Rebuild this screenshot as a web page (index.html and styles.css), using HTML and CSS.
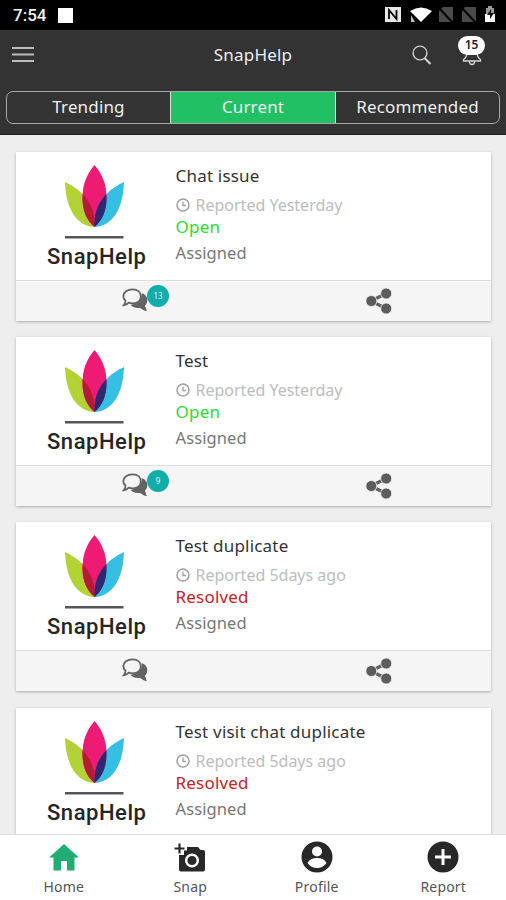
FILE: index.html
```html
<!DOCTYPE html>
<html lang="en">
<head>
<meta charset="utf-8">
<title>SnapHelp</title>
<link rel="stylesheet" href="styles.css">
</head>
<body>
<svg class="defs" width="0" height="0">
  <defs>
    <clipPath id="mid"><path d="M34.500 5C43 15 46.500 25 46.500 38C46.500 51 42 61 34.500 67C27 61 22.500 51 22.500 38C22.500 25 26 15 34.500 5Z"/></clipPath>
    <symbol id="logo" viewBox="0 0 70 82">
      <path fill="#b3d235" d="M5 22C18 28 36 41 34.500 67C17 66 6 50 5 22Z"/>
      <path fill="#35bfe3" d="M64 22C51 28 33 41 34.500 67C52 66 63 50 64 22Z"/>
      <path fill="#ed1b73" d="M34.500 5C43 15 46.500 25 46.500 38C46.500 51 42 61 34.500 67C27 61 22.500 51 22.500 38C22.500 25 26 15 34.500 5Z"/>
      <g clip-path="url(#mid)">
        <path fill="#b51b33" d="M5 22C18 28 36 41 34.500 67C17 66 6 50 5 22Z"/>
        <path fill="#2d2871" d="M64 22C51 28 33 41 34.500 67C52 66 63 50 64 22Z"/>
      </g>
      <path fill="#56565a" d="M5 76h58.500v2.500H5z"/>
    </symbol>
    <symbol id="clock" viewBox="0 0 14 14">
      <circle cx="7" cy="7" r="6" fill="none" stroke="#a0a0a0" stroke-width="1.500"/>
      <path d="M7 3.500V7.500H10" fill="none" stroke="#a0a0a0" stroke-width="1.300"/>
    </symbol>
    <symbol id="chat" viewBox="0 0 26 24">
      <path fill="#636363" d="M21 5.500C24.500 7.500 26 10.500 25 14C24.700 15.500 24 16.500 23 17.500C23 19.500 23.800 21.500 25 23C22 22.800 20 21.500 18.500 20C14 20.500 10.500 19.200 8.500 16.800C15.500 17 19.500 13 21 5.500Z"/>
      <path fill="#f5f5f5" stroke="#636363" stroke-width="1.800" d="M10.500 1.300C15.800 1.300 18.800 4.300 18.800 8.300C18.800 12.400 15.800 15.300 10.800 15.300C9.300 15.300 8 15.100 6.800 14.700C5.500 16.200 3.800 17.100 1.700 17.300C2.900 15.900 3.500 14.600 3.500 12.800C2 11.500 1.300 10 1.300 8.300C1.300 4.300 5.400 1.300 10.500 1.300Z"/>
      <path fill="#636363" d="M19.500 5C25 7.500 26.500 13 22.800 17.500L24.500 22.500L18.500 19.500C15 20 12 19 10 16.500C16.500 16 20.500 12 19.500 5Z"/>
    </symbol>
    <symbol id="share" viewBox="0 0 26 26">
      <path d="M5 13L20 5.500M5 13L20 20.500" stroke="#636363" stroke-width="3.600"/>
      <g fill="#5c5c5c" stroke="#f5f5f5" stroke-width=".8"><circle cx="5.300" cy="13" r="5.500"/><circle cx="20.200" cy="5.500" r="5.500"/><circle cx="20.200" cy="20.500" r="5.500"/></g>
    </symbol>
  </defs>
</svg>
<div class="app">
  <div class="status">
    <span class="time">7:54</span><span class="square"></span>
    <svg class="indicators" width="114" height="18" viewBox="0 0 114 18">
      <path fill="#e8e8e8" d="M1 1h16v15H1z"/><path fill="none" stroke="#080808" stroke-width="1.800" d="M5 13V4L12.500 13V4"/>
      <path fill="#fff" d="M26 5Q37-2 48 5L37 16Z"/><path fill="#bbb" d="M27 9l4 7h-4z"/>
      <path fill="#4a4a4a" d="M59 1h10v15H55V5zM81 1h11v15H78V5z"/><path stroke="#050505" stroke-width="2" d="M55 2l14 15M78 2l14 15"/>
      <path fill="#999" d="M104 0h4v2h2v6h-8V2h2z"/><path fill="#fff" d="M101 8h10v8h-10z"/><path fill="#151515" d="M107 3l-4 6h3v4l4-6h-3z"/>
    </svg>
  </div>
  <header class="header">
    <div class="bar">
      <svg class="menu" width="22" height="18" viewBox="0 0 22 18"><path d="M0 2h22M0 8.500h22M0 15h22" stroke="#bcbcbc" stroke-width="1.800"/></svg>
      <h1>SnapHelp</h1>
      <svg class="search" width="20" height="21" viewBox="0 0 20 21" fill="none"><circle cx="8" cy="8" r="6.900" stroke="#d0d0d0" stroke-width="1.400"/><path d="M12.500 13L18.500 19" stroke="#d8d8d8" stroke-width="2"/></svg>
      <div class="bell"><svg width="20" height="22" viewBox="0 0 20 22" fill="none" stroke="#d5d5d5" stroke-width="1.300"><path d="M5 1V8C5 12 4 14 1.500 15.500V17H18.500V15.500C16 14 15 12 15 8V1M7.500 17.500A2.500 3 0 0 0 12.500 17.500"/></svg><span class="count">15</span></div>
    </div>
    <div class="tabs"><span class="tab">Trending</span><span class="tab active">Current</span><span class="tab">Recommended</span></div>
  </header>
  <main class="list">
    <article class="card">
      <div class="body">
        <div class="brand"><svg width="70" height="82"><use href="#logo"/></svg><span>SnapHelp</span></div>
        <div class="info"><h2>Chat issue</h2><p class="when"><svg width="14" height="14"><use href="#clock"/></svg><span>Reported Yesterday</span></p><p class="open">Open</p><p class="assigned">Assigned</p></div>
      </div>
      <div class="actions"><div class="action"><svg width="26" height="24"><use href="#chat"/></svg><span class="badge">13</span></div><div class="action"><svg width="26" height="26"><use href="#share"/></svg></div></div>
    </article>
    <article class="card">
      <div class="body">
        <div class="brand"><svg width="70" height="82"><use href="#logo"/></svg><span>SnapHelp</span></div>
        <div class="info"><h2>Test</h2><p class="when"><svg width="14" height="14"><use href="#clock"/></svg><span>Reported Yesterday</span></p><p class="open">Open</p><p class="assigned">Assigned</p></div>
      </div>
      <div class="actions"><div class="action"><svg width="26" height="24"><use href="#chat"/></svg><span class="badge">9</span></div><div class="action"><svg width="26" height="26"><use href="#share"/></svg></div></div>
    </article>
    <article class="card">
      <div class="body">
        <div class="brand"><svg width="70" height="82"><use href="#logo"/></svg><span>SnapHelp</span></div>
        <div class="info"><h2>Test duplicate</h2><p class="when"><svg width="14" height="14"><use href="#clock"/></svg><span>Reported 5days ago</span></p><p class="resolved">Resolved</p><p class="assigned">Assigned</p></div>
      </div>
      <div class="actions"><div class="action"><svg width="26" height="24"><use href="#chat"/></svg></div><div class="action"><svg width="26" height="26"><use href="#share"/></svg></div></div>
    </article>
    <article class="card">
      <div class="body">
        <div class="brand"><svg width="70" height="82"><use href="#logo"/></svg><span>SnapHelp</span></div>
        <div class="info"><h2>Test visit chat duplicate</h2><p class="when"><svg width="14" height="14"><use href="#clock"/></svg><span>Reported 5days ago</span></p><p class="resolved">Resolved</p><p class="assigned">Assigned</p></div>
      </div>
    </article>
  </main>
  <nav class="nav">
    <div class="item"><svg width="32" height="32" viewBox="0 0 32 32"><path fill="#22ad73" d="M16 3L1 16.500H5.500V29.500H13V20H19V29.500H26.500V16.500H31Z"/></svg><span>Home</span></div>
    <div class="item"><svg width="32" height="32" viewBox="0 0 32 32"><path fill="#282828" d="M13 6H24L26.500 9H29Q31 9 31 11V28.500Q31 30.500 29 30.500H7Q5 30.500 5 28.500V14H10V9.500H13Z"/><path stroke="#282828" stroke-width="2.200" d="M5.500 2.500V12.500M.5 7.500H10.500"/><circle cx="18" cy="19.500" r="5.800" fill="none" stroke="#fff" stroke-width="2.400"/></svg><span>Snap</span></div>
    <div class="item"><svg width="32" height="32" viewBox="0 0 32 32"><circle cx="16" cy="16" r="15.500" fill="#282828"/><circle cx="16" cy="10.500" r="5" fill="#fff"/><path fill="#fff" d="M6.500 22Q9 17 16 17T25.500 22Q22 27 16 27T6.500 22Z"/></svg><span>Profile</span></div>
    <div class="item"><svg width="32" height="32" viewBox="0 0 32 32"><circle cx="16" cy="16" r="15.500" fill="#282828"/><path stroke="#fff" stroke-width="3" d="M16 8V24M8 16H24"/></svg><span>Report</span></div>
  </nav>
</div>
</body>
</html>
```
FILE: styles.css
```css
* { box-sizing: border-box; }
body { margin: 0; font-family: "Noto Sans", "Open Sans", sans-serif; }
h1, h2, p { margin: 0; font-weight: 400; }
svg { display: block; flex: none; }
.defs { position: absolute; }
.app { width: 506px; height: 900px; display: flex; flex-direction: column; overflow: hidden; background: #eee; }
.status { height: 30px; flex: none; background: #000; display: flex; align-items: center; padding: 0 10px 0 13px; }
.time { color: #f2f2f2; font: 500 17px/30px Roboto, sans-serif; width: 45px; }
.square { width: 15px; height: 15px; background: #fff; }
.indicators { margin-left: auto; margin-right: -2px; }
.header { height: 105px; flex: none; background: #333; border-bottom: 1px solid #222; }
.bar { height: 61px; display: grid; grid-template-columns: 1fr auto 1fr; position: relative; }
.menu { margin: 16px 0 0 12px; }
h1 { font-size: 17px; line-height: 24px; letter-spacing: .2px; color: #eee; margin-top: 13px; }
.bar .search { margin: 15px 0 0 120px; }
.bell { position: absolute; left: 462px; top: 14px; }
.count { position: absolute; left: -4px; top: -8px; width: 27px; height: 19px; border-radius: 10px; background: #fff; color: #222; font-size: 12px; font-weight: 600; line-height: 18px; text-align: center; }
.tabs { height: 33px; margin: 0 6px; border: 1px solid #a8a8a8; border-radius: 7px; display: grid; grid-template-columns: 163px 166px 1fr; overflow: hidden; }
.tab { color: #eee; font-size: 17px; letter-spacing: .15px; line-height: 30px; text-align: center; }
.active { background: #22c065; border-left: 1px solid #ddd; border-right: 1px solid #ddd; }
.list { flex: 1; min-height: 0; overflow: hidden; padding: 17px 15px 0 16px; display: flex; flex-direction: column; gap: 16.200px; }
.card { flex: none; background: #fff; height: 169px; box-shadow: 0 1px 3px rgba(0,0,0,.28); border-radius: 1px; }
.body { height: 128px; display: grid; grid-template-columns: 159.500px 1fr; }
.brand { padding: 8px 0 0; display: flex; flex-direction: column; align-items: center; }
.brand svg { margin-right: 1px; }
.brand span { font: 500 22px/26px Roboto, sans-serif; color: #252525; margin-top: 2px; letter-spacing: .55px; margin-left: 2px; }
.info { padding-top: 12px; }
h2 { font-size: 17px; letter-spacing: .2px; line-height: 24px; color: #333; }
.when { display: flex; align-items: center; gap: 6px; font-size: 16px; line-height: 22px; color: #bdbdbd; margin-top: 6px; }
.open, .resolved { font-size: 17px; letter-spacing: .2px; line-height: 24px; margin-top: -1px; }
.open { color: #2bdc35; }
.resolved { color: #cc2026; }
.assigned { font-size: 16.500px; letter-spacing: .1px; line-height: 24px; color: #777; margin-top: 2px; }
.actions { height: 41px; background: #f5f5f5; border-top: 1px solid #dedede; display: grid; grid-template-columns: 1fr 1fr; }
.action { display: flex; justify-content: center; padding-top: 7px; position: relative; }
.action:last-child { padding-left: 13px; }
.badge { position: absolute; left: 131px; top: 4px; width: 22px; height: 22px; border-radius: 50%; background: #10ada9; color: #d8ffff; font-size: 8px; line-height: 22px; text-align: center; }
.nav { height: 66px; flex: none; background: #fff; border-top: 1px solid #ddd; display: grid; grid-template-columns: repeat(4, 1fr); position: relative; }
.item { display: flex; flex-direction: column; align-items: center; padding: 6px 0 0 1px; }
.item span { font-size: 14px; line-height: 20px; letter-spacing: .2px; color: #555; margin-top: 4px; }
```
